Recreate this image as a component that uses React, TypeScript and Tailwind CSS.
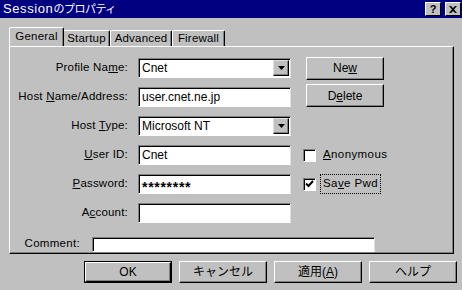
import React from 'react'

const font = { fontFamily: '"Liberation Sans", "Noto Sans CJK JP", sans-serif' }

function Field({ value, w = 'w-[153px]', stars = false }: { value?: string; w?: string; stars?: boolean }) {
    return (
        <div className={`${w} h-[20px] bg-white border border-t-[#808080] border-l-[#808080] border-b-white border-r-[#dfdfdf] shadow-[inset_1px_1px_0_#000] flex items-center pl-[3px] text-[12px] text-black`}>
            {stars ? <span className="text-[14px] tracking-[0.7px] translate-y-[3px] font-bold">{value}</span> : value}
        </div>
    )
}

function Combo({ value }: { value: string }) {
    return (
        <div className="w-[153px] h-[20px] bg-white border border-t-[#808080] border-l-[#808080] border-b-white border-r-[#dfdfdf] shadow-[inset_1px_1px_0_#000] flex items-center pl-[3px] pr-[1px] text-[12px] text-black">
            <span className="flex-1">{value}</span>
            <div className="w-[16px] h-[16px] bg-[#c0c0c0] border border-t-[#dfdfdf] border-l-[#dfdfdf] border-b-black border-r-black shadow-[inset_-1px_-1px_0_#808080] flex items-center justify-center">
                <svg width="7" height="4" viewBox="0 0 7 4"><path d="M0 0h7L3.5 4z" fill="#000" /></svg>
            </div>
        </div>
    )
}

function Btn({ children, w = 'w-[78px]', h = 'h-[23px]', def = false }: { children: React.ReactNode; w?: string; h?: string; def?: boolean }) {
    const inner = (
        <div className="w-full h-full bg-[#c0c0c0] border border-t-white border-l-white border-b-black border-r-black shadow-[inset_-1px_-1px_0_#808080] flex items-center justify-center text-[12px] text-black">
            {children}
        </div>
    )
    if (def) return <div className={`${w} ${h} border border-black`}>{inner}</div>
    return <div className={`${w} ${h}`}>{inner}</div>
}

function Row({ label, children, right }: { label: React.ReactNode; children: React.ReactNode; right?: React.ReactNode }) {
    return (
        <div className="flex items-center h-[20px]">
            <div className="w-[118px] text-right text-[11.5px] text-black tracking-[0.2px]">{label}</div>
            <div className="ml-[10px]">{children}</div>
            {right}
        </div>
    )
}

function Check({ checked, label, focus }: { checked?: boolean; label: React.ReactNode; focus?: boolean }) {
    return (
        <div className="ml-[12px] flex items-center">
            <div className="w-[13px] h-[13px] bg-white border border-t-[#808080] border-l-[#808080] border-b-white border-r-white shadow-[inset_1px_1px_0_#000] flex items-center justify-center">
                {checked && (
                    <svg width="9" height="8" viewBox="0 0 9 8"><path d="M1 3.5 L3.5 6 L8 1" stroke="#000" strokeWidth="2" fill="none" /></svg>
                )}
            </div>
            <span className={`ml-[4px] px-[2px] text-[11.5px] tracking-[0.4px] text-black ${focus ? 'border border-dotted border-black' : 'border border-transparent'}`}>{label}</span>
        </div>
    )
}

function Tab({ label, w, active }: { label: string; w: string; active?: boolean }) {
    return (
        <div className={`${w} ${active ? 'h-[19px] -mr-[1px] z-10' : 'h-[16px] mt-[3px]'} border-t border-l border-white border-r border-r-black rounded-tl-[2px] rounded-tr-[2px] shadow-[inset_-1px_0_0_#808080] bg-[#c0c0c0] flex items-center justify-center text-[11.5px] tracking-[0.2px] text-black`}>
            {label}
        </div>
    )
}

export default function App() {
    return (
        <div className="w-[462px] h-[290px] bg-[#c0c0c0] flex flex-col overflow-hidden" style={font}>
            <div className="h-[18px] bg-[#000080] flex items-center justify-between pl-[3px] pr-[1px]">
                <span className="text-white text-[13px] tracking-[0.6px]">Session<span className="text-[11px] tracking-[-0.5px]">のプロパティ</span></span>
                <div className="flex gap-[4px]">
                    <div className="w-[16px] h-[14px] bg-[#c0c0c0] border border-t-white border-l-white border-b-black border-r-black flex items-center justify-center text-[11px] font-bold text-black leading-none">?</div>
                    <div className="w-[16px] h-[14px] bg-[#c0c0c0] border border-t-white border-l-white border-b-black border-r-black flex items-center justify-center">
                        <svg width="8" height="7" viewBox="0 0 8 7"><path d="M0 0h2l2 2 2-2h2L5 3.5 8 7H6L4 5 2 7H0l3-3.5z" fill="#000" /></svg>
                    </div>
                </div>
            </div>

            <div className="flex items-start ml-[9px] mt-[9px] h-[19px]">
                <Tab label="General" w="w-[55px]" active />
                <Tab label="Startup" w="w-[47px]" />
                <Tab label="Advanced" w="w-[62px]" />
                <Tab label="Firewall" w="w-[53px]" />
            </div>

            <div className="ml-[9px] w-[445px] h-[208px] border border-t-white border-l-white border-r-black border-b-black shadow-[inset_-1px_-1px_0_#808080] pt-[11px] flex flex-col">
                <div className="flex flex-col gap-[9px]">
                    <Row label={<>Profile Na<u>m</u>e:</>} right={<div className="ml-[15px]"><Btn>Ne<u>w</u></Btn></div>}>
                        <Combo value="Cnet" />
                    </Row>
                    <Row label={<>Host <u>N</u>ame/Address:</>} right={<div className="ml-[15px] -mt-[3px]"><Btn>D<u>e</u>lete</Btn></div>}>
                        <Field value="user.cnet.ne.jp" />
                    </Row>
                    <Row label={<>Host <u>T</u>ype:</>}>
                        <Combo value="Microsoft NT" />
                    </Row>
                    <Row label={<><u>U</u>ser ID:</>} right={<Check label={<><u>A</u>nonymous</>} />}>
                        <Field value="Cnet" />
                    </Row>
                    <Row label={<><u>P</u>assword:</>} right={<Check checked focus label={<>Sa<u>v</u>e Pwd</>} />}>
                        <Field value="********" stars />
                    </Row>
                    <Row label={<>A<u>c</u>count:</>}>
                        <Field />
                    </Row>
                </div>
                <div className="flex items-center mt-[13px] h-[16px]">
                    <div className="w-[70px] text-right text-[11.5px] tracking-[0.3px] text-black">Comment:</div>
                    <div className="ml-[12px]">
                        <div className="w-[283px] h-[15px] bg-white border border-t-[#808080] border-l-[#808080] border-b-white border-r-[#dfdfdf] shadow-[inset_1px_1px_0_#000]" />
                    </div>
                </div>
            </div>

            <div className="flex ml-[84px] mt-[7px] gap-[7px]">
                <Btn w="w-[88px]" h="h-[22px]" def>OK</Btn>
                <Btn w="w-[88px]" h="h-[22px]">キャンセル</Btn>
                <Btn w="w-[88px]" h="h-[22px]">適用(<u>A</u>)</Btn>
                <Btn w="w-[88px]" h="h-[22px]">ヘルプ</Btn>
            </div>
        </div>
    )
}
